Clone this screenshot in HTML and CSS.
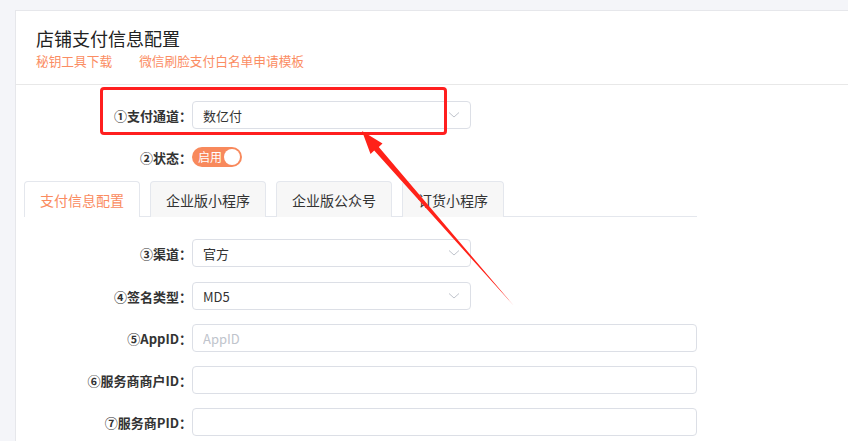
FILE: index.html
```html
<!doctype html>
<html lang="zh-CN">
<head>
  <meta charset="UTF-8">
  <meta name="viewport" content="width=device-width, initial-scale=1.0">
  <title>店铺支付信息配置</title>
  <link rel="stylesheet" href="styles.css">
</head>
<body>
  <div class="card">
    <div class="card-head">
      <div class="title">店铺支付信息配置</div>
      <div class="links">
        <a class="link">秘钥工具下载</a>
        <a class="link">微信刷脸支付白名单申请模板</a>
      </div>
    </div>

    <div class="card-body">
      <div class="form-item">
        <label class="label">①支付通道：</label>
        <div class="select">
          <span>数亿付</span>
          <svg class="arrow-down" width="12" height="8" viewBox="0 0 12 8"><polyline points="1,1.5 6,6 11,1.5" fill="none" stroke="#c0c4cc" stroke-width="1"/></svg>
        </div>
      </div>
      <div class="form-item form-item-switch">
        <label class="label">②状态：</label>
        <div class="switch">
          <span class="switch-text">启用</span>
          <span class="switch-knob"></span>
        </div>
      </div>

      <div class="tabs">
        <div class="tab active">支付信息配置</div>
        <div class="tab">企业版小程序</div>
        <div class="tab">企业版公众号</div>
        <div class="tab">订货小程序</div>
      </div>

      <div class="tab-panel">
        <div class="form-item first">
          <label class="label">③渠道：</label>
          <div class="select">
            <span>官方</span>
            <svg class="arrow-down" width="12" height="8" viewBox="0 0 12 8"><polyline points="1,1.5 6,6 11,1.5" fill="none" stroke="#c0c4cc" stroke-width="1"/></svg>
          </div>
        </div>
        <div class="form-item">
          <label class="label">④签名类型：</label>
          <div class="select">
            <span>MD5</span>
            <svg class="arrow-down" width="12" height="8" viewBox="0 0 12 8"><polyline points="1,1.5 6,6 11,1.5" fill="none" stroke="#c0c4cc" stroke-width="1"/></svg>
          </div>
        </div>
        <div class="form-item">
          <label class="label">⑤AppID：</label>
          <input class="input" type="text" placeholder="AppID">
        </div>
        <div class="form-item">
          <label class="label">⑥服务商商户ID：</label>
          <input class="input" type="text">
        </div>
        <div class="form-item">
          <label class="label">⑦服务商PID：</label>
          <input class="input" type="text">
        </div>
      </div>
    </div>
  </div>

  <!-- annotation drawn over the screenshot -->
  <div class="mark-box"></div>
  <svg class="mark-arrow" width="848" height="441" viewBox="0 0 848 441">
    <polygon points="362,131 382.5,143.5 378.8,147 514,306 374.2,150.6 370.5,154" fill="#ff2219"/>
  </svg>
</body>
</html>
```

FILE: styles.css
```css
* {
    box-sizing: border-box;
}

body {
    margin: 0;
    padding: 10px 0 0 15px;
    background: #f4f5f9;
    font-family: "Noto Sans CJK SC", "Noto Sans", sans-serif;
    color: #333;
    position: relative;
    height: 441px;
    overflow: hidden;
}

.card {
    background: #fff;
    border: 1px solid #e6e7eb;
    border-right: none;
    height: 460px;
}

.card-head {
    padding: 15px 20px 12px;
    border-bottom: 1px solid #e8e8e8;
}

.title {
    font-size: 18px;
    line-height: 24px;
    color: #222;
}

.links {
    display: flex;
    gap: 27px;
    font-size: 12.7px;
    line-height: 22px;
}

.link {
    color: #fb8d63;
    cursor: pointer;
}

.card-body {
    padding: 16px 0 0 8px;
}

.form-item {
    display: flex;
    align-items: center;
    height: 28px;
    margin-bottom: 14px;
}

.form-item.first {
    margin-bottom: 15px;
}

.form-item-switch {
    margin-top: 1px;
    margin-bottom: 10px;
}

.label {
    width: 168px;
    text-align: right;
    font-size: 13px;
    font-weight: 600;
    color: #333;
    white-space: nowrap;
}

.select {
    width: 279px;
    height: 28px;
    border: 1px solid #dcdfe6;
    border-radius: 4px;
    display: flex;
    align-items: center;
    justify-content: space-between;
    padding: 0 10px 0 10px;
    font-size: 13px;
    color: #333;
}

.input {
    width: 505px;
    height: 28px;
    border: 1px solid #dcdfe6;
    border-radius: 4px;
    padding: 0 10px;
    font-family: inherit;
    font-size: 13px;
    color: #333;
    outline: none;
}

.input::placeholder {
    color: #c0c4cc;
}

.switch {
    width: 50px;
    height: 20px;
    border-radius: 10px;
    background: #f8895c;
    display: flex;
    align-items: center;
    justify-content: space-between;
    padding: 0 2px 0 6px;
}

.switch-text {
    color: #fff;
    font-size: 12px;
    line-height: 20px;
}

.switch-knob {
    width: 16px;
    height: 16px;
    border-radius: 50%;
    background: #fff;
}

.tabs {
    display: flex;
    gap: 10px;
    width: 673px;
    height: 36px;
    border-bottom: 1px solid #e4e7ed;
}

.tab {
    height: 36px;
    padding: 0 15px;
    border: 1px solid #e4e7ed;
    border-bottom: none;
    border-radius: 4px 4px 0 0;
    background: #f7f7f7;
    font-size: 14px;
    line-height: 36px;
    color: #333;
}

.tab.active {
    background: #fff;
    color: #fa8b60;
}

.tab-panel {
    padding-top: 22px;
}

.mark-box {
    position: absolute;
    left: 100px;
    top: 87px;
    width: 347px;
    height: 48px;
    border: 3px solid #ff1f1f;
    border-radius: 4px;
}

.mark-arrow {
    position: absolute;
    left: 0;
    top: 0;
    pointer-events: none;
}
```
